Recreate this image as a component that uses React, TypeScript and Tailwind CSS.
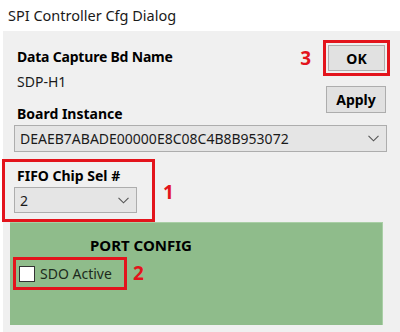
import React from "react";

const RED = "border-[#e3141c]";

function Chevron() {
  return (
    <svg width="11" height="7" viewBox="0 0 11 7" fill="none" aria-hidden>
      <path d="M0.5 0.8 L5.5 5.8 L10.5 0.8" stroke="#555" strokeWidth="1.1" />
    </svg>
  );
}

function Combo({ value, className }: { value: string; className: string }) {
  return (
    <div
      className={`flex items-center justify-between border border-[#adadad] bg-[#e5e5e5] pl-[5px] pr-[7px] text-[14px] text-[#1a1a1a] ${className}`}
    >
      <span>{value}</span>
      <Chevron />
    </div>
  );
}

export default function App() {
  return (
    <div className="h-[332px] w-[400px] overflow-hidden bg-white font-['Noto_Sans',sans-serif] text-black">
      <div className="flex h-[31px] items-center pl-[8px] text-[14.5px] text-[#1a1a1a]">
        SPI Controller Cfg Dialog
      </div>

      <div className="ml-[3px] flex h-[301px] flex-col bg-[#f0f0f0]">
        <div className="flex justify-between">
          <div className="flex flex-col pl-[14px] pt-[16px] text-[14px] leading-[20px]">
            <span className="font-bold tracking-[-0.2px]">Data Capture Bd Name</span>
            <span className="mt-[5px] text-[#1a1a1a]">SDP-H1</span>
            <span className="mt-[12px] font-bold">Board Instance</span>
          </div>
          <div className="flex flex-col items-end pr-[10px] pt-[9px]">
            <div className="flex items-center gap-[12px]">
              <span className="text-[19px] font-bold text-[#e3141c]">3</span>
              <div className={`border-[3px] ${RED} p-[2px]`}>
                <div className="flex h-[26px] w-[57px] items-center justify-center border border-[#adadad] bg-[#e1e1e1] text-[14px] font-bold">
                  OK
                </div>
              </div>
            </div>
            <div className="mr-[4px] mt-[10px] flex h-[27px] w-[60px] items-center justify-center border border-[#adadad] bg-[#e1e1e1] text-[14px] font-bold">
              Apply
            </div>
          </div>
        </div>

        <Combo value="DEAEB7ABADE00000E8C08C4B8B953072" className="ml-[11px] mt-px h-[27px] w-[373px]" />

        <div className="ml-[-1px] mt-[7px] flex items-center">
          <div className={`flex h-[63px] w-[153px] flex-col border-[3px] ${RED}`}>
            <span className="pl-[12px] pt-[4px] text-[14px] font-bold leading-[20px]">FIFO Chip Sel #</span>
            <Combo value="2" className="ml-[9px] mt-px h-[26px] w-[123px]" />
          </div>
          <span className="ml-[8px] mt-[4px] text-[19px] font-bold text-[#e3141c]">1</span>
        </div>

        <div className="ml-[7px] flex h-[103px] w-[373px] flex-col border-r border-t border-[#a9cfa6] bg-[#8fbc8b]">
          <span className="pl-[80px] pt-[12px] text-[15px] font-bold leading-[20px]">PORT CONFIG</span>
          <div className="ml-[3px] mt-[2px] flex items-center">
            <div className={`flex h-[33px] w-[114px] items-center border-[3px] ${RED} pl-[3px]`}>
              <span className="h-[16px] w-[16px] border border-[#333] bg-white" />
              <span className="ml-[5px] text-[14px] text-[#1c2b1c]">SDO Active</span>
            </div>
            <span className="ml-[6px] text-[19px] font-bold text-[#e3141c]">2</span>
          </div>
        </div>
      </div>
    </div>
  );
}
